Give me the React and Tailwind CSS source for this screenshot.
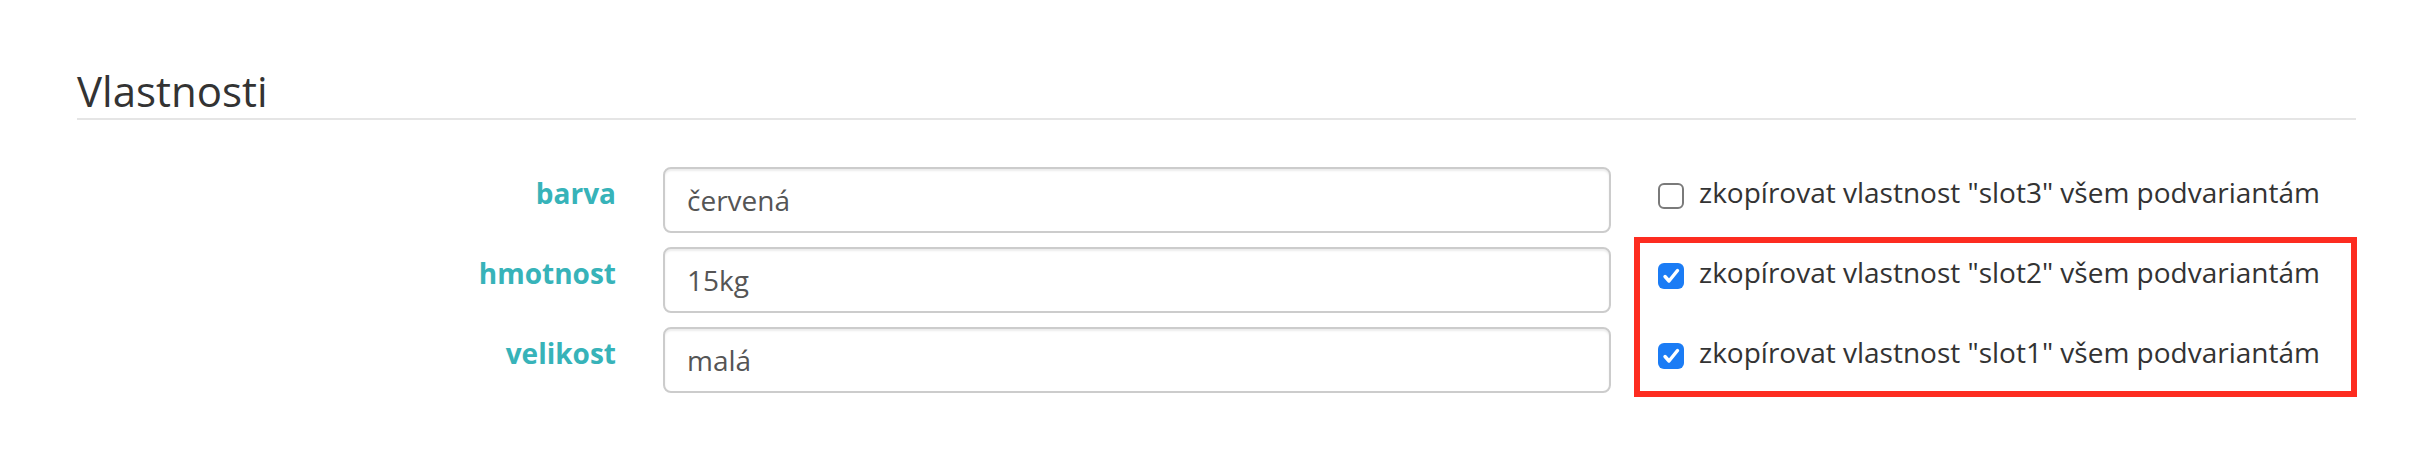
import React from "react";

const rows = [
  { label: "barva", value: "červená", slot: "slot3", checked: false },
  { label: "hmotnost", value: "15kg", slot: "slot2", checked: true },
  { label: "velikost", value: "malá", slot: "slot1", checked: true },
];

function Box({ checked }) {
  if (checked) {
    return (
      <span className="mt-[16px] flex h-[26px] w-[26px] shrink-0 items-center justify-center rounded-[6px] bg-[#1b7cf5]">
        <svg width="26" height="26" viewBox="0 0 26 26" fill="none">
          <path
            d="M7 13.5 L11 18 L19.5 7.5"
            stroke="white"
            strokeWidth="3.4"
            strokeLinecap="round"
            strokeLinejoin="round"
          />
        </svg>
      </span>
    );
  }
  return (
    <span className="mt-[16px] block h-[26px] w-[26px] shrink-0 rounded-[6px] border-2 border-[#7a7a7a] bg-white" />
  );
}

export default function App() {
  return (
    <div
      className="relative h-[462px] w-full bg-white pl-[77px] pr-[70px] pt-[68px]"
      style={{ fontFamily: '"Open Sans", "Noto Sans", sans-serif' }}
    >
      <h2 className="border-b-2 border-[#e5e5e5] pb-[4px] text-[42px] font-normal leading-[46px] text-[#333333]">
        Vlastnosti
      </h2>

      <div className="mt-[47px] flex flex-col gap-[14px]">
        {rows.map((r) => (
          <div key={r.label} className="flex h-[66px] items-start">
            <div className="w-[539px] shrink-0 pt-[6px] text-right text-[28px] font-bold leading-[40px] text-[#37b3b9]">
              {r.label}
            </div>
            <input
              readOnly
              value={r.value}
              className="ml-[47px] h-[66px] w-[948px] shrink-0 rounded-[8px] border-2 border-[#cccccc] bg-white px-[22px] text-[28px] text-[#555555] shadow-[inset_0_2px_2px_rgba(0,0,0,0.075)] outline-none"
              style={{ fontFamily: '"Open Sans", "Noto Sans", sans-serif' }}
            />
            <label className="ml-[47px] flex items-start gap-[15px]">
              <Box checked={r.checked} />
              <span className="mt-[5px] whitespace-nowrap text-[28px] leading-[40px] text-[#333333]">
                zkopírovat vlastnost "{r.slot}" všem podvariantám
              </span>
            </label>
          </div>
        ))}
      </div>

      <div className="pointer-events-none absolute left-[1634px] top-[237px] h-[160px] w-[723px] border-[6px] border-[#fd2c20]" />
    </div>
  );
}
